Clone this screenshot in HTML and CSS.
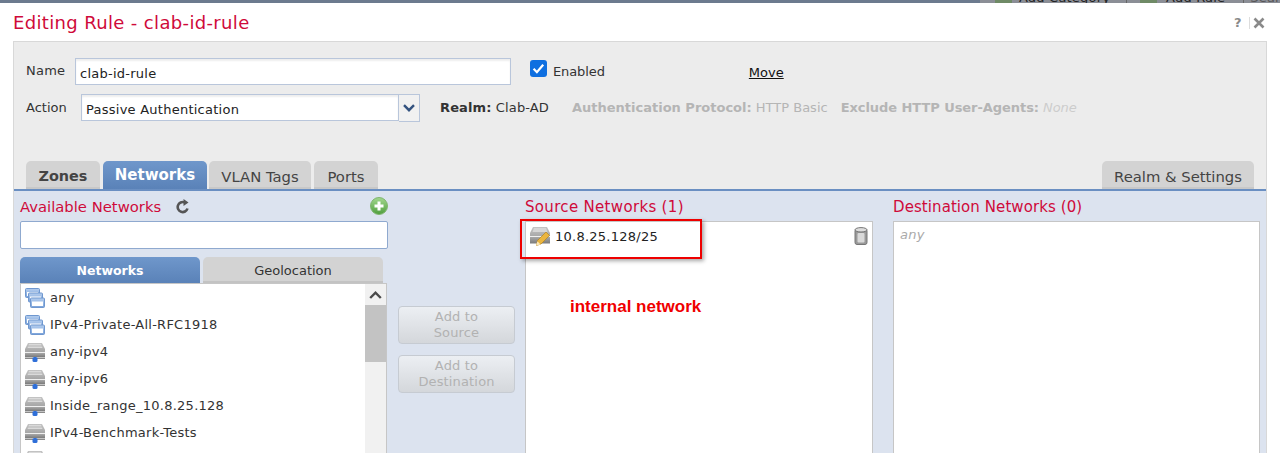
FILE: index.html
```html
<!DOCTYPE html>
<html lang="en">
<head>
<meta charset="utf-8">
<title>Editing Rule - clab-id-rule</title>
<link rel="stylesheet" href="styles.css">
</head>
<body>
<svg class="defs" width="0" height="0" aria-hidden="true">
  <defs>
    <linearGradient id="srv" x1="0" y1="0" x2="0" y2="1"><stop offset="0" stop-color="#c4c4c4"/><stop offset="1" stop-color="#a6a6a6"/></linearGradient>
    <linearGradient id="band" x1="0" y1="0" x2="0" y2="1"><stop offset="0" stop-color="#a8a8a8"/><stop offset="1" stop-color="#7b7b7b"/></linearGradient>
    <linearGradient id="win" x1="0" y1="0" x2="0" y2="1"><stop offset="0" stop-color="#b4cdee"/><stop offset="1" stop-color="#7ba3da"/></linearGradient>
    <linearGradient id="grn" x1="0" y1="0" x2="0" y2="1"><stop offset="0" stop-color="#a3d88f"/><stop offset="1" stop-color="#4f9e3d"/></linearGradient>
    <symbol id="group" viewBox="0 0 20 20">
      <g stroke="#6f97cf" stroke-width="1">
        <rect x="0.5" y="0.5" width="14" height="9" rx="1" fill="url(#win)"/><rect x="2" y="4" width="11" height="4" fill="#fff" stroke="none"/>
        <rect x="3.5" y="5" width="14" height="9" rx="1" fill="url(#win)"/><rect x="5" y="8.5" width="11" height="4" fill="#fff" stroke="none"/>
        <rect x="5.5" y="10" width="14" height="9.5" rx="1" fill="url(#win)"/><rect x="7" y="13.5" width="11" height="4.5" fill="#fff" stroke="none"/>
      </g>
    </symbol>
    <symbol id="server" viewBox="0 0 20 20">
      <path d="M3 1h14l3 6v3H0V7z" fill="url(#srv)"/>
      <path d="M4 2h12l1.5 4h-15z" fill="#dadada"/>
      <rect x="3" y="3.5" width="14" height="1" fill="#b5b5b5"/>
      <rect x="0" y="10" width="20" height="1" fill="#efefef"/>
      <rect x="0" y="11" width="20" height="4" fill="url(#band)"/>
      <rect x="0" y="15.5" width="8" height="1.5" fill="#8a8a8a"/>
      <rect x="12" y="15.5" width="8" height="1.5" fill="#8a8a8a"/>
      <rect x="7.5" y="15" width="5" height="5" rx="1.5" fill="#2f6fd8"/>
    </symbol>
    <symbol id="server-edit" viewBox="0 0 20 20">
      <path d="M3 1h14l3 6v4H0V7z" fill="url(#srv)"/>
      <path d="M4 2h12l1.5 4h-15z" fill="#d6d6d6"/>
      <rect x="0" y="10" width="20" height="1" fill="#efefef"/>
      <rect x="0" y="11" width="20" height="6.5" fill="url(#band)"/>
      <path d="M7.500 14.500l8.500-8.500 3.500 3.500-8.500 8.500-4.500 1.500z" fill="#eab53f" stroke="#b5851f" stroke-width=".7"/>
      <path d="M6.200 19.600l1.100-4.400 3.300 3.300z" fill="#fbe7b8"/>
    </symbol>
  </defs>
</svg>

<div class="backdrop">
  <div class="back-tools">
    <span class="back-dot"></span>
    <span class="back-item">Add Category</span>
    <span class="back-sep"></span>
    <span class="back-dot back-dot-rule"></span>
    <span class="back-item">Add Rule</span>
    <span class="back-sep back-sep-last"></span>
    <span class="back-item back-search">Search</span>
  </div>
</div>

<main class="modal">
  <header class="modal-head">
    <h1 class="modal-title">Editing Rule - clab-id-rule</h1>
    <div class="modal-actions">
      <span class="help">?</span>
      <span class="sep"></span>
      <svg class="close" width="12" height="12" viewBox="0 0 12 12"><path d="M1.500 1.500l9 9M10.500 1.500l-9 9" stroke="#8a8a8a" stroke-width="2.600"/></svg>
    </div>
  </header>

  <section class="panel">
    <div class="form">
      <div class="row row-name">
        <label class="lbl lbl-name">Name</label>
        <div class="field field-name">clab-id-rule</div>
        <span class="check"><svg width="17" height="17" viewBox="0 0 17 17"><rect width="17" height="17" rx="3" fill="#0f6fe0"/><path d="M3.600 8.800l3.300 3.400 6.300-7.400" fill="none" stroke="#fff" stroke-width="2.200"/></svg></span>
        <span class="lbl lbl-enabled">Enabled</span>
        <a class="move">Move</a>
      </div>
      <div class="row row-action">
        <label class="lbl lbl-action">Action</label>
        <div class="field field-action">Passive Authentication</div>
        <div class="select-btn"><svg width="12" height="8" viewBox="0 0 12 8"><path d="M1 1.200l5 5 5-5" fill="none" stroke="#33527f" stroke-width="2.400"/></svg></div>
        <span class="meta"><b>Realm:</b> Clab-AD</span>
        <span class="meta meta-off meta-proto"><b>Authentication Protocol:</b> HTTP Basic</span>
        <span class="meta meta-off meta-excl"><b>Exclude HTTP User-Agents:</b> <i>None</i></span>
      </div>
    </div>

    <nav class="tabs">
      <span class="tab tab-zones">Zones</span>
      <span class="tab tab-active">Networks</span>
      <span class="tab tab-vlan">VLAN Tags</span>
      <span class="tab tab-ports">Ports</span>
      <span class="tab tab-realm">Realm &amp; Settings</span>
    </nav>

    <div class="tab-body">
      <div class="col col-avail">
        <div class="col-head">
          <h2 class="col-title col-title-avail">Available Networks</h2>
          <svg class="refresh" width="14" height="15" viewBox="0 0 14 15"><path d="M11.500 9.500A5 5 0 1 1 8.500 3.400" fill="none" stroke="#555" stroke-width="2.600"/><path d="M7.500 0v7l5-3.400z" fill="#555"/></svg>
          <svg class="add" width="18" height="18" viewBox="0 0 18 18"><circle cx="9" cy="9" r="8.500" fill="url(#grn)" stroke="#7fb56e"/><path d="M9 4.500v9M4.500 9h9" stroke="#fff" stroke-width="3"/></svg>
        </div>
        <div class="search"></div>
        <div class="subtabs">
          <span class="subtab subtab-active">Networks</span>
          <span class="subtab">Geolocation</span>
        </div>
        <div class="list">
          <ul class="items">
            <li class="item"><svg class="ico"><use href="#group"/></svg>any</li>
            <li class="item"><svg class="ico"><use href="#group"/></svg>IPv4-Private-All-RFC1918</li>
            <li class="item"><svg class="ico"><use href="#server"/></svg>any-ipv4</li>
            <li class="item"><svg class="ico"><use href="#server"/></svg>any-ipv6</li>
            <li class="item"><svg class="ico"><use href="#server"/></svg>Inside_range_10.8.25.128</li>
            <li class="item"><svg class="ico"><use href="#server"/></svg>IPv4-Benchmark-Tests</li>
            <li class="item"><svg class="ico"><use href="#server"/></svg></li>
          </ul>
          <div class="scroll">
            <div class="scroll-up"><svg width="13" height="8" viewBox="0 0 13 8"><path d="M1.200 7l5.300-5.300L11.800 7" fill="none" stroke="#4a4a4a" stroke-width="2.400"/></svg></div>
            <div class="scroll-thumb"></div>
          </div>
        </div>
      </div>

      <div class="col-btns">
        <button class="btn">Add to<br>Source</button>
        <button class="btn">Add to<br>Destination</button>
      </div>

      <div class="col col-src">
        <h2 class="col-title col-title-plain col-title-src">Source Networks (1)</h2>
        <div class="box box-src">
          <div class="src-item">
            <svg class="ico ico-edit"><use href="#server-edit"/></svg>
            <span>10.8.25.128/25</span>
            <svg class="trash" width="14" height="18" viewBox="0 0 14 18"><rect x="1" y="2" width="12" height="15.500" rx="2" fill="#9a9a9a" stroke="#777"/><ellipse cx="7" cy="2.800" rx="6" ry="2.200" fill="#ddd" stroke="#777"/><rect x="3.500" y="6" width="7" height="9.500" rx="1" fill="#d9d9d9"/></svg>
          </div>
        </div>
      </div>

      <div class="col col-dst">
        <h2 class="col-title col-title-plain col-title-dst">Destination Networks (0)</h2>
        <div class="box box-dst"><i>any</i></div>
      </div>
    </div>
  </section>
</main>

<div class="callout"></div>
<div class="note">internal network</div>
</body>
</html>
```
FILE: styles.css
```css
* { box-sizing: border-box; }
html, body { margin: 0; padding: 0; height: 453px; overflow: hidden; background: #fff; }
body { font-family: "DejaVu Sans", Verdana, sans-serif; font-size: 13px; letter-spacing: .25px; color: #333; position: relative; }
.defs { position: absolute; }
h1, h2 { margin: 0; font-weight: normal; }

.backdrop { height: 3px; background: #6c7a8e; overflow: hidden; }
.back-tools { margin-left: 980px; height: 3px; background: #8b8e96; display: flex; color: #222; font-size: 13px; line-height: 3px; letter-spacing: .2px; }
.back-dot { width: 17px; height: 3px; margin: 0 7px 0 15px; background: #6f8a66; flex: none; }
.back-dot-rule { margin: 0 9px 0 13px; }
.back-item { margin-top: -4px; white-space: nowrap; }
.back-sep { width: 1px; height: 3px; background: #666; margin-left: 16px; flex: none; }
.back-sep-last { margin-left: 18px; }
.back-search { margin-left: 6px; color: #555; }

.modal { background: #fff; height: 450px; margin-right: 4px; display: flex; flex-direction: column; }
.modal-head { height: 38px; display: flex; align-items: flex-start; justify-content: space-between; padding: 9px 11px 0 13px; flex: none; }
.modal-title { font-size: 18px; letter-spacing: .35px; line-height: 22px; color: #cf0a3a; }
.modal-actions { display: flex; align-items: center; padding-top: 3px; }
.help { font-weight: bold; font-size: 13px; color: #8a8a8a; width: 13px; }
.sep { width: 1px; height: 12px; background: #ddd; margin: 0 3px 0 2px; }

.panel { flex: 1; margin: 0 9px 0 13px; background: #ececec; border: 1px solid #d8d8d8; border-bottom: 0; display: flex; flex-direction: column; min-height: 0; }
.form { height: 117px; flex: none; padding-top: 16px; }
.row { display: flex; align-items: flex-start; }
.row-name { height: 36px; }
.lbl { color: #333; line-height: 26px; }
.lbl-name { margin-left: 12px; width: 49px; }
.field { background: #fff; border: 1px solid #b9c6db; height: 27px; color: #222; line-height: 29px; padding-left: 4px; box-shadow: inset 0 2px 2px #eee; }
.field-name { width: 436px; }
.check { margin: 2px 0 0 19px; height: 17px; }
.lbl-enabled { margin-left: 6px; line-height: 27px; letter-spacing: -.1px; }
.move { margin-left: 144px; color: #111; text-decoration: underline; line-height: 30px; letter-spacing: 0; height: 24px; }
.lbl-action { margin-left: 12px; width: 55px; line-height: 28px; letter-spacing: 0; }
.field-action { width: 318px; }
.select-btn { width: 21px; height: 28px; border: 1px solid #b9c6db; border-left: 0; display: flex; align-items: flex-start; justify-content: center; padding-top: 9px; background: #f1f1f1; }
.meta { line-height: 27px; margin-left: 20px; color: #333; white-space: nowrap; letter-spacing: .13px; }
.meta-off { color: #b5b5b5; letter-spacing: 0; }
.meta-proto { margin-left: 23px; }
.meta-excl { margin-left: 13px; letter-spacing: -.06px; }
.meta i { color: #ccc; }

.tabs { height: 30px; flex: none; display: flex; align-items: flex-end; padding-left: 12px; padding-right: 12px; gap: 3px; }
.tab { height: 28px; border-radius: 5px 5px 0 0; background: #d3d3d3; color: #444; font-size: 14.8px; letter-spacing: 0; line-height: 31px; text-align: center; border-bottom: 2px solid #c8c8c8; }
.tab-zones { width: 74px; font-weight: bold; font-size: 14.4px; }
.tab-active { width: 104px; font-weight: bold; color: #fff; background: linear-gradient(#6f97cb, #5a82b8); border-bottom: 0; font-size: 15px; line-height: 29px; }
.tab-vlan { width: 102px; margin-left: -1px; }
.tab-ports { width: 64px; }
.tab-realm { width: 152px; margin-left: auto; }

.tab-body { flex: 1; background: #dce3ef; border-top: 2px solid #6a8fc2; display: flex; padding-left: 6px; padding-right: 6px; min-height: 0; overflow: hidden; }
.col-title { color: #cf0a3a; font-size: 15px; letter-spacing: 0; line-height: 20px; white-space: nowrap; }
.col-title-avail { font-size: 14.8px; }
.col-title-plain { margin-top: 6px; height: 24px; }
.col-title-src { letter-spacing: .32px; }
.col-title-dst { letter-spacing: .08px; }
.col-avail { width: 368px; flex: none; }
.col-head { display: flex; align-items: flex-start; height: 30px; padding-top: 6px; }
.refresh { margin: 2px 0 0 15px; }
.add { margin: 0 0 0 auto; }
.search { height: 28px; background: #fff; border: 1px solid #8fa9cf; border-radius: 2px; }
.subtabs { display: flex; gap: 3px; margin-top: 8px; height: 26px; }
.subtab { width: 180px; height: 26px; background: #d3d3d3; border-radius: 5px 5px 0 0; text-align: center; line-height: 28px; letter-spacing: 0; color: #333; border-bottom: 2px solid #c3c3c3; }
.subtab-active { background: linear-gradient(#6f97cb, #5a82b8); color: #fff; font-weight: bold; font-size: 12.500px; border-bottom: 0; }
.list { background: #fff; border: 1px solid #c6c6c6; width: 367px; height: 172px; display: flex; }
.items { list-style: none; margin: 0; padding: 0; flex: 1; overflow: hidden; }
.item { height: 27px; display: flex; align-items: center; padding-left: 4px; color: #333; gap: 5px; white-space: nowrap; }
.ico { width: 20px; height: 20px; flex: none; }
.scroll { width: 21px; flex: none; background: #f1f1f1; }
.scroll-up { height: 21px; display: flex; align-items: center; justify-content: center; }
.scroll-thumb { height: 57px; background: #c3c3c3; }

.col-btns { width: 137px; flex: none; padding: 115px 10px 0; display: flex; flex-direction: column; gap: 11px; }
.btn { height: 38px; width: 117px; padding: 0 6px; border: 1px solid #c6cbd2; border-radius: 4px; background: linear-gradient(#eceff3, #d4d7db); color: #b2b2b2; font-family: inherit; font-size: 13px; letter-spacing: .15px; line-height: 16px; }

.col-src { width: 348px; flex: none; }
.col-dst { width: 367px; flex: none; margin-left: 20px; }
.box { background: #fff; border: 1px solid #c6c6c6; height: 240px; }
.src-item { display: flex; align-items: center; height: 28px; padding: 0 4px; gap: 5px; color: #222; }
.trash { margin-left: auto; }
.box-dst { padding: 5px 6px; color: #aaa; }

.callout { position: absolute; left: 520px; top: 219px; width: 182px; height: 40px; border: 2px solid #ee0000; box-shadow: 2px 2px 4px rgba(0,0,0,.35); }
.note { position: absolute; left: 570px; top: 298px; font-family: "Liberation Sans", Arial, sans-serif; font-weight: bold; font-size: 17px; letter-spacing: 0; line-height: 18px; color: #f00000; white-space: nowrap; }
```
